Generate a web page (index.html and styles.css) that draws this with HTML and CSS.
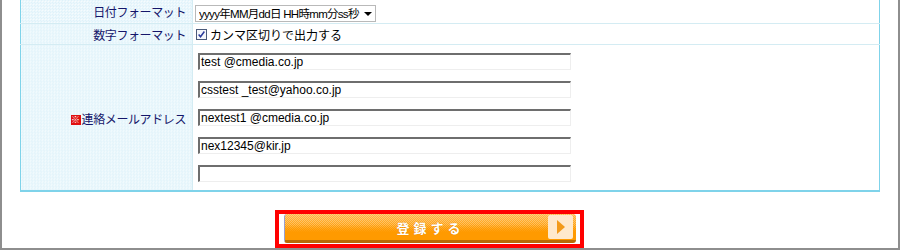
FILE: index.html
```html
<!DOCTYPE html>
<html lang="ja">
<head>
<meta charset="utf-8">
<link rel="stylesheet" href="styles.css">
</head>
<body>
<div class="frame">
  <table class="form">
    <tr class="r1">
      <th>日付フォーマット</th>
      <td>
        <div class="select"><span class="sel-text">yyyy年MM月dd日 HH時mm分ss秒</span><span class="arrow"></span></div>
      </td>
    </tr>
    <tr class="r2">
      <th>数字フォーマット</th>
      <td>
        <label class="check"><span class="box"><svg width="11" height="11" viewBox="0 0 11 11"><path d="M2 5.5 L4.3 8.3 L9 1.8" fill="none" stroke="#2a3a9a" stroke-width="1.8"/></svg></span>カンマ区切りで出力する</label>
      </td>
    </tr>
    <tr class="r3">
      <th><span class="req">※</span>連絡メールアドレス</th>
      <td>
        <div class="inputs">
          <div class="inp">test @cmedia.co.jp</div>
          <div class="inp">csstest _test@yahoo.co.jp</div>
          <div class="inp">nextest1 @cmedia.co.jp</div>
          <div class="inp">nex12345@kir.jp</div>
          <div class="inp"></div>
        </div>
      </td>
    </tr>
  </table>
  <div class="actions">
    <div class="btn-wrap">
      <div class="btn"><span class="btn-label">登録する</span><span class="btn-arrow"><svg width="10" height="14" viewBox="0 0 10 14"><path d="M1 0 L9 7 L1 14 Z" fill="#f39a1a"/></svg></span></div>
    </div>
  </div>
</div>
</body>
</html>
```
FILE: styles.css
```css
html, body {
  margin: 0;
  padding: 0;
  background: #ffffff;
}
body {
  font-family: "Liberation Sans", "Noto Sans CJK JP", sans-serif;
  font-size: 12px;
}
.frame {
  width: 900px;
  height: 250px;
  box-sizing: border-box;
  border-left: 2px solid #8e8e8e;
  border-right: 2px solid #8e8e8e;
  border-bottom: 2px solid #8e8e8e;
  padding-left: 18px;
}
.form {
  width: 860px;
  border-collapse: collapse;
  border-left: 1px solid #7fd3ea;
  border-right: 1px solid #7fd3ea;
  border-bottom: 2px solid #7fd3ea;
}
.form th, .form td {
  padding: 0;
  border-bottom: 1px solid #d4ecf3;
  vertical-align: middle;
}
.form tr.r3 th, .form tr.r3 td {
  border-bottom: none;
}
.form th {
  width: 172px;
  text-align: right;
  font-weight: normal;
  color: #15166a;
  padding-right: 6px;
  box-sizing: border-box;
  border-right: 1px solid #d4ecf3;
  background-color: #eef9fd;
  background-image: repeating-conic-gradient(#dff2fa 0 25%, #f6fcfe 0 50%);
  background-size: 3px 3px;
  letter-spacing: -0.4px;
}
.form td {
  padding-left: 2px;
  color: #000;
}
.r1 th, .r1 td { height: 23px; }
.r2 th, .r2 td { height: 20px; }
.r3 th, .r3 td { height: 145px; }
.r3 th { padding-top: 2px; }
.select {
  display: inline-flex;
  align-items: center;
  width: 181px;
  height: 17px;
  box-sizing: border-box;
  border: 1px solid #b9b9b9;
  background: #fff;
  padding-left: 3px;
  margin-top: 3px;
  overflow: hidden;
}
.sel-text {
  flex: 1;
  white-space: nowrap;
  overflow: hidden;
  font-size: 11.5px;
  letter-spacing: -0.7px;
}
.arrow {
  flex: none;
  width: 0;
  height: 0;
  border-left: 4px solid transparent;
  border-right: 4px solid transparent;
  border-top: 4px solid #000;
  margin-left: 2px;
  margin-right: 3px;
  margin-top: 2px;
}
.check {
  display: inline-flex;
  align-items: center;
  gap: 3px;
  margin-left: 1px;
}
.box {
  width: 11px;
  height: 11px;
  box-sizing: border-box;
  border: 1px solid #4a5a7a;
  background: #f4f6fb;
  display: inline-flex;
  align-items: center;
  justify-content: center;
}
.box svg { display: block; }
.req {
  display: inline-block;
  width: 10px;
  height: 10px;
  line-height: 10px;
  background: #e01010;
  color: #fff;
  font-size: 9px;
  text-align: center;
  vertical-align: 1px;
  margin-right: 1px;
  letter-spacing: 0;
}
.inputs {
  display: flex;
  flex-direction: column;
  gap: 11px;
  padding-left: 3px;
  padding-top: 7px;
  padding-bottom: 8px;
}
.inp {
  width: 373px;
  height: 17px;
  box-sizing: border-box;
  border-top: 2px solid #6e6e6e;
  border-left: 2px solid #6e6e6e;
  border-right: 1px solid #eeeeee;
  border-bottom: 1px solid #eeeeee;
  background: #fff;
  padding-left: 1px;
  line-height: 14px;
  white-space: nowrap;
}
.actions {
  display: flex;
  justify-content: flex-start;
  padding-top: 18px;
  padding-left: 255px;
}
.btn-wrap {
  border: 4px solid #ff0000;
  width: 309px;
  height: 38px;
  box-sizing: border-box;
  padding: 0 4px 0 5px;
  background: #fff;
}
.btn {
  height: 29px;
  box-sizing: border-box;
  border-radius: 3px;
  border-bottom: 3px solid #b86a06;
  border-left: 1px solid #9aa0d0;
  background-image:
    linear-gradient(rgba(255,170,40,0) 40%, #ff9a00 70%),
    repeating-conic-gradient(rgba(255,255,255,0.3) 0 25%, rgba(255,255,255,0) 0 50%),
    linear-gradient(#ffb84a, #ff9a00 60%, #ff9200);
  background-size: 100% 100%, 2px 2px, 100% 100%;
  display: flex;
  align-items: center;
}
.btn-label {
  flex: 1;
  text-align: center;
  color: #fff;
  font-family: "Noto Sans CJK JP", sans-serif;
  font-weight: bold;
  font-size: 13px;
  letter-spacing: 4px;
  padding-left: 28px;
  text-shadow: 0 0 1px #d07a00;
}
.btn-arrow {
  width: 25px;
  height: 24px;
  margin-right: 3px;
  border-radius: 2px;
  background: #ffe9cc;
  display: flex;
  align-items: center;
  justify-content: center;
}
.btn-arrow svg { display: block; }
```
